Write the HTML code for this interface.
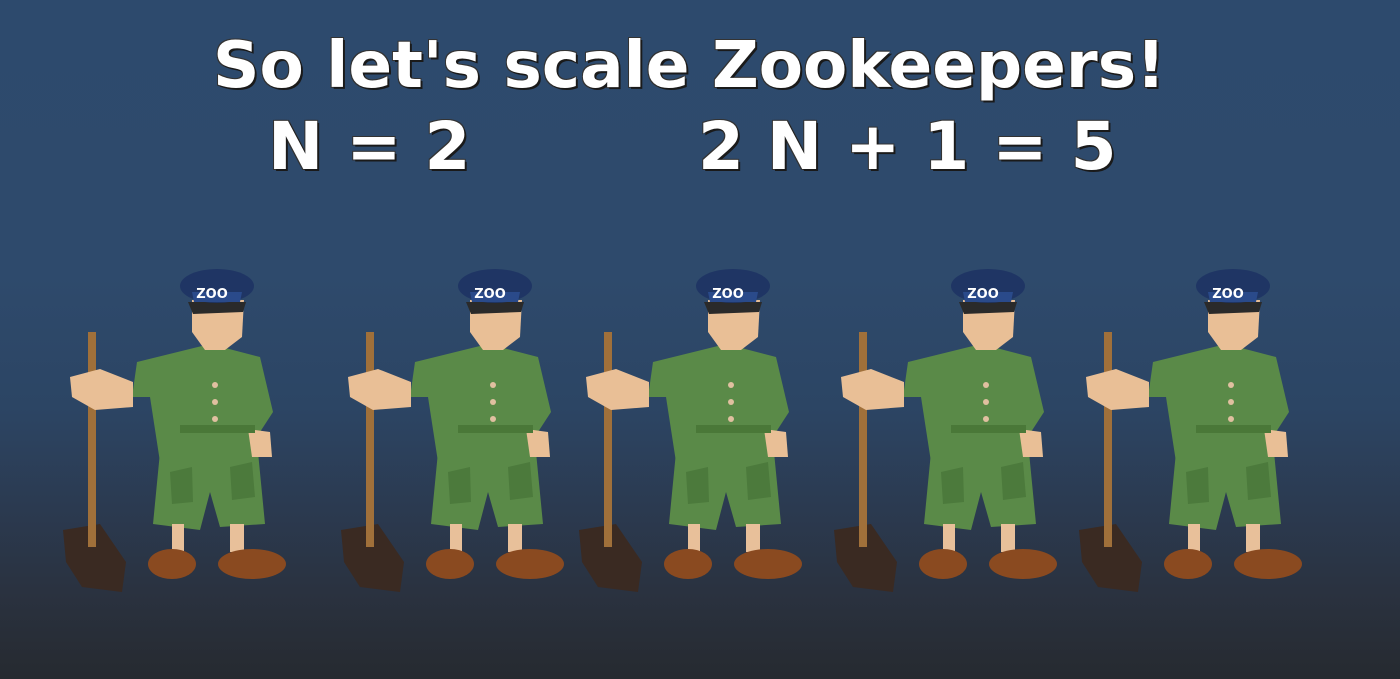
<!DOCTYPE html>
<html><head><meta charset="utf-8"><style>
html,body{margin:0;padding:0}
body{width:1400px;height:679px;overflow:hidden;position:relative;
background:linear-gradient(180deg,#2d4a6d 0%,#2e4a6c 40%,#2c4564 60%,#2b3a50 75%,#2a3240 87%,#262a30 100%);
font-family:"DejaVu Sans","Liberation Sans",sans-serif;}
.t{position:absolute;color:#fff;font-weight:bold;font-size:65px;white-space:nowrap;
text-shadow:2px 2px 0 #1a1a1a,-1px -1px 0 #333,1px -1px 0 #333,-1px 1px 0 #333;line-height:1}
svg{position:absolute;left:0;top:0}
</style></head><body>
<div class="t" style="left:213px;top:34px;font-size:64.5px">So let's scale Zookeepers!</div>
<div class="t" style="left:268px;top:114px;font-size:66px">N = 2</div>
<div class="t" style="left:698px;top:114px;font-size:66px">2 N + 1 = 5</div>
<svg width="1400" height="679">
<defs>
<g id="k">
<polygon points="3,268 40,262 66,300 62,330 22,325 6,300" fill="#3a2a22"/>
<rect x="28" y="70" width="8" height="215" fill="#a0703a"/>
<path d="M77,100 L150,82 L200,95 L213,150 L200,170 L198,200 L100,200 L90,135 L72,135 Z" fill="#5a8a48"/>
<path d="M100,190 L198,190 L205,262 L160,265 L150,230 L140,268 L93,262 Z" fill="#5a8a48"/>
<path d="M110,210 L132,205 L133,240 L112,242 Z M170,205 L192,200 L195,235 L172,238 Z" fill="#4c7a3c"/>
<rect x="112" y="262" width="12" height="28" fill="#e8c09a"/>
<rect x="170" y="262" width="14" height="28" fill="#e8c09a"/>
<ellipse cx="112" cy="302" rx="24" ry="15" fill="#8a4a20"/>
<ellipse cx="192" cy="302" rx="34" ry="15" fill="#8a4a20"/>
<path d="M10,115 L40,107 L73,120 L73,145 L35,148 L12,135 Z" fill="#e9bf96"/>
<path d="M188,167 L210,170 L212,195 L192,195 Z" fill="#e9bf96"/>
<path d="M132,38 L184,38 L182,75 L165,88 L145,88 L132,70 Z" fill="#e9bf96"/>
<path d="M128,40 L186,40 L183,50 L133,52 Z" fill="#2a2a2a"/>
<ellipse cx="157" cy="24" rx="37" ry="17" fill="#1f3564"/>
<path d="M132,30 L182,30 L180,40 L134,40 Z" fill="#2a4a8a"/>
<text x="152" y="36" fill="#fff" font-size="13" font-weight="bold" text-anchor="middle" font-family="DejaVu Sans,sans-serif">ZOO</text>
<circle cx="155" cy="123" r="3" fill="#e0c0a0"/><circle cx="155" cy="140" r="3" fill="#e0c0a0"/><circle cx="155" cy="157" r="3" fill="#e0c0a0"/>
<rect x="120" y="163" width="75" height="8" fill="#4a7838"/>
</g>
</defs>
<use href="#k" x="60" y="262"/>
<use href="#k" x="338" y="262"/>
<use href="#k" x="576" y="262"/>
<use href="#k" x="831" y="262"/>
<use href="#k" x="1076" y="262"/>
</svg>
</body></html>
